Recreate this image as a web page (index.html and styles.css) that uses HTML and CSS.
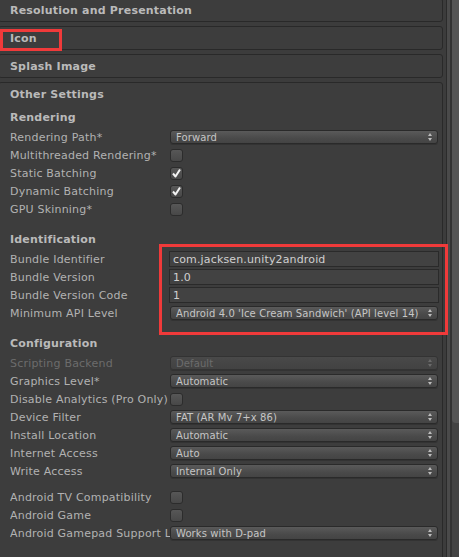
FILE: index.html
```html
<!DOCTYPE html>
<html>
<head>
<meta charset="utf-8">
<link rel="stylesheet" href="styles.css">
</head>
<body>
<div class="window">
  <div class="main">
    <div class="fold"><div class="fold-title">Resolution and Presentation</div></div>
    <div class="fold"><div class="fold-title">Icon</div></div>
    <div class="fold"><div class="fold-title">Splash Image</div></div>
    <div class="fold open">
      <div class="fold-title">Other Settings</div>
      <div class="fold-body">
        <div class="sub">Rendering</div>
        <div class="row"><div class="label">Rendering Path*</div><div class="popup">Forward<span class="arrows"></span></div></div>
        <div class="row"><div class="label">Multithreaded Rendering*</div><div class="check"></div></div>
        <div class="row"><div class="label">Static Batching</div><div class="check on"><svg viewBox="0 0 13 13" width="13" height="13"><path d="M3 6.5 L5.5 9.5 L10 2.5" fill="none" stroke="#f2f2f2" stroke-width="2" stroke-linejoin="round"/></svg></div></div>
        <div class="row"><div class="label">Dynamic Batching</div><div class="check on"><svg viewBox="0 0 13 13" width="13" height="13"><path d="M3 6.5 L5.5 9.5 L10 2.5" fill="none" stroke="#f2f2f2" stroke-width="2" stroke-linejoin="round"/></svg></div></div>
        <div class="row"><div class="label">GPU Skinning*</div><div class="check"></div></div>

        <div class="sub gap">Identification</div>
        <div class="row"><div class="label">Bundle Identifier</div><div class="field">com.jacksen.unity2android</div></div>
        <div class="row"><div class="label">Bundle Version</div><div class="field">1.0</div></div>
        <div class="row"><div class="label">Bundle Version Code</div><div class="field">1</div></div>
        <div class="row"><div class="label">Minimum API Level</div><div class="popup">Android 4.0 'Ice Cream Sandwich' (API level 14)<span class="arrows"></span></div></div>

        <div class="sub gap">Configuration</div>
        <div class="row"><div class="label disabled">Scripting Backend</div><div class="popup disabled">Default<span class="arrows"></span></div></div>
        <div class="row"><div class="label">Graphics Level*</div><div class="popup">Automatic<span class="arrows"></span></div></div>
        <div class="row"><div class="label">Disable Analytics (Pro Only)</div><div class="check"></div></div>
        <div class="row"><div class="label">Device Filter</div><div class="popup">FAT (AR Mv 7+x 86)<span class="arrows"></span></div></div>
        <div class="row"><div class="label">Install Location</div><div class="popup">Automatic<span class="arrows"></span></div></div>
        <div class="row"><div class="label">Internet Access</div><div class="popup">Auto<span class="arrows"></span></div></div>
        <div class="row"><div class="label">Write Access</div><div class="popup">Internal Only<span class="arrows"></span></div></div>

        <div class="row spaced"><div class="label">Android TV Compatibility</div><div class="check"></div></div>
        <div class="row"><div class="label">Android Game</div><div class="check"></div></div>
        <div class="row"><div class="label">Android Gamepad Support Level</div><div class="popup">Works with D-pad<span class="arrows"></span></div></div>

        <div class="row last"><div class="label">Scripting Define Symbols</div></div>
      </div>
    </div>
  </div>
  <div class="scrollbar">
    <div class="sb-edge"></div>
    <div class="sb-strip"></div>
    <div class="sb-sep"></div>
    <div class="sb-track"><div class="sb-thumb"></div></div>
  </div>
  <div class="mark mark-icon"></div>
  <div class="mark mark-id"></div>
</div>
</body>
</html>
```
FILE: styles.css
```css
html, body {
  margin: 0;
  padding: 0;
  background: #3c3c3c;
  overflow: hidden;
}
.window {
  position: relative;
  width: 459px;
  height: 557px;
  display: flex;
  overflow: hidden;
  font-family: "DejaVu Sans", "Liberation Sans", sans-serif;
  font-size: 11px;
  letter-spacing: 0.2px;
  color: #b2b2b2;
}
.main {
  width: 443px;
  margin-top: -2px;
  flex: none;
}
.fold {
  margin-left: -2px;
  border: 1px solid #292929;
  border-radius: 3px;
  margin-bottom: 4px;
  background: #3d3d3d;
}
.fold-title {
  height: 22px;
  line-height: 24px;
  padding-left: 11px;
  font-weight: bold;
  color: #bababa;
  overflow: hidden;
}
.fold-body {
  padding: 3px 4px 0 11px;
}
.sub {
  height: 18px;
  line-height: 20px;
  font-weight: bold;
  color: #bababa;
  margin-bottom: 2px;
  overflow: hidden;
}
.sub.gap { margin-top: 12px; }
.row {
  height: 18px;
  display: flex;
  align-items: center;
}
.row.spaced { margin-top: 8px; }
.row.last { margin-top: 10px; }
.label {
  width: 160px;
  height: 18px;
  flex: none;
  white-space: nowrap;
  overflow: hidden;
  line-height: 20px;
}
.label.disabled { color: #6c6c6c; }
.popup {
  position: relative;
  flex: 1;
  height: 14px;
  line-height: 13px;
  box-sizing: border-box;
  border: 1px solid #2a2a2a;
  border-radius: 3px;
  background: linear-gradient(#5a5a5a, #4a4a4a 60%, #444444);
  box-shadow: 0 1px 0 #333333;
  padding-left: 5px;
  font-size: 10px;
  letter-spacing: 0.1px;
  color: #c6c6c6;
  white-space: nowrap;
  overflow: hidden;
}
.popup.disabled {
  color: #6c6c6c;
  background: linear-gradient(#494949, #424242);
  border-color: #333333;
}
.arrows {
  position: absolute;
  right: 4px;
  top: 2px;
  width: 5px;
  height: 8px;
}
.arrows::before, .arrows::after {
  content: "";
  position: absolute;
  left: 0;
  border-left: 2.5px solid transparent;
  border-right: 2.5px solid transparent;
}
.arrows::before { top: 0; border-bottom: 3px solid #bdbdbd; }
.arrows::after { bottom: 0; border-top: 3px solid #bdbdbd; }
.popup.disabled .arrows::before { border-bottom-color: #6a6a6a; }
.popup.disabled .arrows::after { border-top-color: #6a6a6a; }
.field {
  flex: 1;
  margin: 0 -1px;
  height: 16px;
  line-height: 15px;
  box-sizing: border-box;
  border: 1px solid #2a2a2a;
  background: #424242;
  padding-left: 3px;
  color: #d0d0d0;
  letter-spacing: 0.15px;
  white-space: nowrap;
  overflow: hidden;
}
.check {
  width: 13px;
  height: 13px;
  box-sizing: border-box;
  border: 1px solid #2c2c2c;
  border-radius: 3px;
  background: linear-gradient(#575757, #484848);
  position: relative;
  margin-top: 1px;
}
.check svg {
  position: absolute;
  left: -1px;
  top: -1px;
}
.scrollbar {
  flex: none;
  width: 16px;
  display: flex;
}
.sb-edge { width: 3px; background: #3c3c3c; border-right: 1px solid #2b2b2b; }
.sb-strip { width: 3px; background: #4a4a4a; }
.sb-sep { width: 2px; background: #333333; }
.sb-track { flex: 1; background: #434343; }
.sb-thumb {
  height: 423px;
  background: #555555;
  border-radius: 0 0 0 4px;
}
.mark {
  position: absolute;
  border: 3px solid #f03a3a;
  box-sizing: border-box;
}
.mark-icon { left: 0; top: 29px; width: 62px; height: 22px; }
.mark-id { left: 159px; top: 244px; width: 289px; height: 91px; }
```
